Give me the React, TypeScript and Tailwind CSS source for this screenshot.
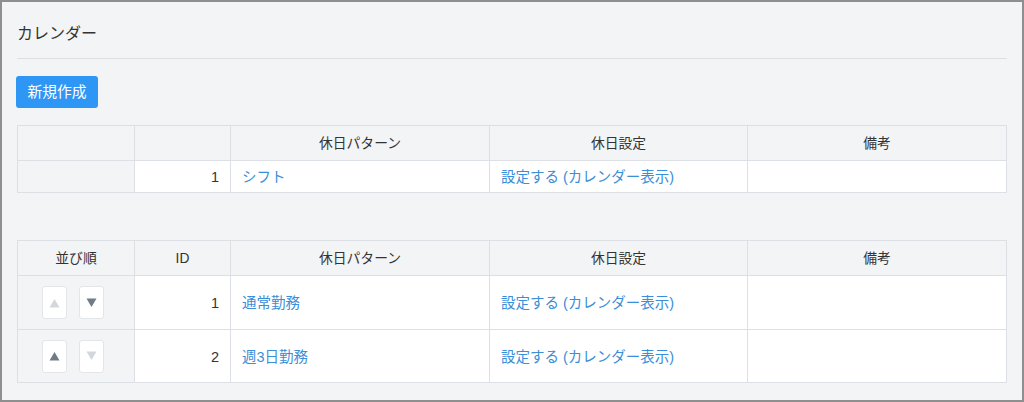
import React from "react";

const font = { fontFamily: '"Liberation Sans", "Noto Sans CJK JP", sans-serif' };

const th = "border border-[#dcdfe3] bg-[#f3f4f6] font-normal text-center text-[13.8px] text-[#333] h-[35px] pt-[2px] pb-0 px-0";
const tdGray = "border border-[#dcdfe3] bg-[#f3f4f6] p-0";
const td = "border border-[#dcdfe3] bg-white text-[14.5px] text-[#333] px-[11px] pt-[3px] pb-0";
const link = "text-[#3b8ed8]";

function ArrowBtn({ dir, enabled }: { dir: "up" | "down"; enabled: boolean }) {
  return (
    <div className="w-[25px] h-[33px] bg-white border border-[#e3e5e8] rounded-[3px] flex items-center justify-center">
      <svg width="11" height="10" viewBox="0 0 11 10">
        {dir === "up" ? (
          <polygon points="5.5,1 10.5,9.5 0.5,9.5" fill={enabled ? "#6f7c88" : "#d3d7db"} />
        ) : (
          <polygon points="0.5,0.5 10.5,0.5 5.5,9" fill={enabled ? "#6f7c88" : "#d3d7db"} />
        )}
      </svg>
    </div>
  );
}

function Cols() {
  return (
    <colgroup>
      <col className="w-[117px]" />
      <col className="w-[96px]" />
      <col className="w-[259px]" />
      <col className="w-[258px]" />
      <col className="w-[259px]" />
    </colgroup>
  );
}

export default function App() {
  const rows = [
    { id: 1, name: "通常勤務", up: false, down: true, h: "h-[54px]" },
    { id: 2, name: "週3日勤務", up: true, down: false, h: "h-[53px]" },
  ];
  return (
    <div style={font} className="w-[1024px] h-[402px] border-2 border-[#8f8f8f] bg-[#f3f4f6] px-[15px] overflow-hidden">
      <div className="pt-[22px] h-[57px] border-b border-[#dcdfe3]">
        <div className="text-[16px] leading-[20px] text-[#333]">カレンダー</div>
      </div>
      <div className="pt-[17px]">
        <button className="w-[82px] h-[32px] bg-[#2e97f6] text-white text-[14.8px] rounded-[3px] ml-[-1px] pt-[1px]">新規作成</button>
      </div>
      <table className="mt-[17px] w-[989px] table-fixed border-collapse">
        <Cols />
        <thead>
          <tr>
            <th className={th}></th>
            <th className={th}></th>
            <th className={th}>休日パターン</th>
            <th className={th}>休日設定</th>
            <th className={th}>備考</th>
          </tr>
        </thead>
        <tbody>
          <tr className="h-[32px]">
            <td className={tdGray}></td>
            <td className={td + " text-right"}>1</td>
            <td className={td}><span className={link}>シフト</span></td>
            <td className={td}><span className={link}>設定する (カレンダー表示)</span></td>
            <td className={td}></td>
          </tr>
        </tbody>
      </table>
      <table className="mt-[47px] w-[989px] table-fixed border-collapse">
        <Cols />
        <thead>
          <tr>
            <th className={th}>並び順</th>
            <th className={th}>ID</th>
            <th className={th}>休日パターン</th>
            <th className={th}>休日設定</th>
            <th className={th}>備考</th>
          </tr>
        </thead>
        <tbody>
          {rows.map((r) => (
            <tr key={r.id} className={r.h}>
              <td className={tdGray}>
                <div className="flex items-center gap-[12px] pl-[24px]">
                  <ArrowBtn dir="up" enabled={r.up} />
                  <ArrowBtn dir="down" enabled={r.down} />
                </div>
              </td>
              <td className={td + " text-right"}>{r.id}</td>
              <td className={td}><span className={link}>{r.name}</span></td>
              <td className={td}><span className={link}>設定する (カレンダー表示)</span></td>
              <td className={td}></td>
            </tr>
          ))}
        </tbody>
      </table>
    </div>
  );
}
